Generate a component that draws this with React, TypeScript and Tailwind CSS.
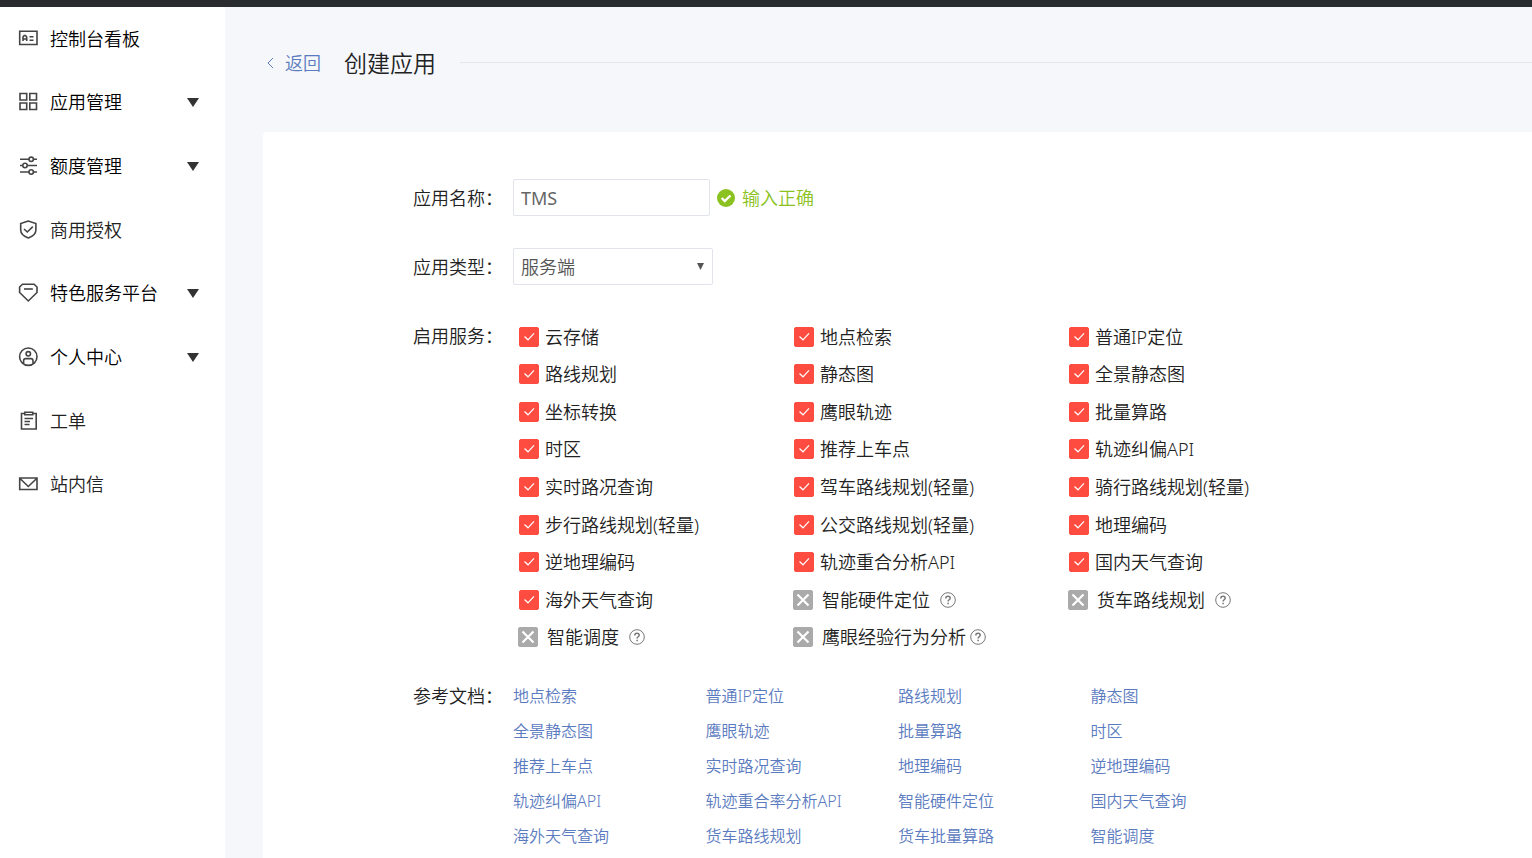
import { ReactNode } from 'react';

interface MenuItem {
  label: string;
  icon: ReactNode;
  sub?: boolean;
  muted?: boolean;
}

const MENU: MenuItem[] = [
  {
    label: '控制台看板',
    icon: (
      <>
        <path d="M1.700 2.200h17.300v13.300H1.700z" />
        <path d="M5 12V8l1.200-1.500h1.300L8.700 8v4M5 10h3.700M11.500 7.700h4M11.500 11.200h4" />
      </>
    ),
  },
  {
    label: '应用管理',
    sub: true,
    icon: <path d="M2 1.500h6.700v6.500H2zM11.800 1.500h6.700v6.500h-6.700zM2 11h6.700v6.500H2zM11.800 11h6.700v6.500h-6.700z" />,
  },
  {
    label: '额度管理',
    sub: true,
    icon: (
      <>
        <path d="M2 3.300h9M15.500 3.300h3.500M2 9.500h2.500M9.500 9.500H19M2 16h9M15.500 16h3.500" />
        <circle cx="13.200" cy="3.300" r="2.200" />
        <circle cx="7" cy="9.500" r="2.200" />
        <circle cx="13.200" cy="16" r="2.200" />
      </>
    ),
  },
  {
    label: '商用授权',
    muted: true,
    icon: (
      <>
        <path d="M10.300 1L2.700 3.500v6.500c0 4 3 6.300 7.600 8 4.600-1.700 7.600-4 7.600-8V3.500z" />
        <path d="M6 9l3.300 3 5.500-5.300" />
      </>
    ),
  },
  {
    label: '特色服务平台',
    sub: true,
    icon: (
      <>
        <path d="M4.500 1.200h11.600l2.900 2.800v5.500l-8.700 8.500-8.700-8.500V4z" />
        <path d="M6 6h8.800" />
      </>
    ),
  },
  {
    label: '个人中心',
    sub: true,
    icon: (
      <>
        <circle cx="10.300" cy="9.700" r="8.700" />
        <circle cx="10.300" cy="6.800" r="2.200" />
        <path d="M5.600 16.500v-2.700c0-1.300.9-2.200 2.200-2.200h5c1.300 0 2.200.9 2.200 2.200v2.700" />
      </>
    ),
  },
  {
    label: '工单',
    muted: true,
    icon: (
      <>
        <path d="M6.800 2.500H3.500V18h14.700V2.500h-3.500M6.800 1.200h7.900v2.500H6.800z" />
        <path d="M6.500 7.500h8.500M6.500 10.500h5.500M6.500 13.500h5" />
      </>
    ),
  },
  {
    label: '站内信',
    muted: true,
    icon: <path d="M1.700 4H19v11.500H1.700zM2 4.500l8.300 8L18.700 4.500" />,
  },
];

interface Service {
  name: string;
  off?: boolean;
  tight?: boolean;
}

const SERVICES: Service[] = [
  { name: '云存储' },
  { name: '地点检索' },
  { name: '普通IP定位' },
  { name: '路线规划' },
  { name: '静态图' },
  { name: '全景静态图' },
  { name: '坐标转换' },
  { name: '鹰眼轨迹' },
  { name: '批量算路' },
  { name: '时区' },
  { name: '推荐上车点' },
  { name: '轨迹纠偏API' },
  { name: '实时路况查询' },
  { name: '驾车路线规划(轻量)' },
  { name: '骑行路线规划(轻量)' },
  { name: '步行路线规划(轻量)' },
  { name: '公交路线规划(轻量)' },
  { name: '地理编码' },
  { name: '逆地理编码' },
  { name: '轨迹重合分析API' },
  { name: '国内天气查询' },
  { name: '海外天气查询' },
  { name: '智能硬件定位', off: true },
  { name: '货车路线规划', off: true },
  { name: '智能调度', off: true },
  { name: '鹰眼经验行为分析', off: true, tight: true },
];

const DOCS = [
  '地点检索', '普通IP定位', '路线规划', '静态图',
  '全景静态图', '鹰眼轨迹', '批量算路', '时区',
  '推荐上车点', '实时路况查询', '地理编码', '逆地理编码',
  '轨迹纠偏API', '轨迹重合率分析API', '智能硬件定位', '国内天气查询',
  '海外天气查询', '货车路线规划', '货车批量算路', '智能调度',
];

function Sidebar() {
  return (
    <nav className="w-[225px] shrink-0 bg-white">
      <ul>
        {MENU.map(item => (
          <li key={item.label}>
            <a
              href="#"
              className={`flex items-center pl-[18px] pr-[26px] ${item.sub ? 'h-16' : 'h-[63px]'} ${item.muted ? 'text-[#222]' : 'text-black'}`}
            >
              <svg viewBox="0 0 20 20" className="mr-3 size-5 shrink-0" fill="none" stroke="#444" strokeWidth="1.600">
                {item.icon}
              </svg>
              <span className="flex-1">{item.label}</span>
              {item.sub && (
                <svg viewBox="0 0 12 9" className="h-[9px] w-3" fill="#333">
                  <path d="M0 0h12L6 9z" />
                </svg>
              )}
            </a>
          </li>
        ))}
      </ul>
    </nav>
  );
}

function HelpIcon() {
  return (
    <svg viewBox="0 0 16 16" className="size-4" fill="none" stroke="#777">
      <circle cx="8" cy="8" r="7.300" />
      <path d="M5.800 6.500c0-1.400.9-2.200 2.200-2.200s2.200.8 2.200 1.900c0 1.500-2.100 1.600-2.100 3.200" strokeWidth="1.500" />
      <path d="M8.100 10.700v1.500" strokeWidth="1.500" />
    </svg>
  );
}

function ServiceBox({ service }: { service: Service }) {
  const { name, off, tight } = service;
  return (
    <div className="flex items-center">
      <label className={`flex items-center ${off ? 'gap-[9px] pl-[5px]' : 'gap-[6px] pl-[6px]'}`}>
        <span className="grid size-5 shrink-0">
          <input
            type="checkbox"
            defaultChecked={!off}
            disabled={off}
            className="peer col-start-1 row-start-1 size-5 appearance-none rounded-xs border border-[#bbb] checked:border-[#ff4c40] checked:bg-[#ff4c40] disabled:border-[#aaa] disabled:bg-[#aaa]"
          />
          {off ? (
            <svg viewBox="0 0 20 20" className="pointer-events-none col-start-1 row-start-1 size-5" fill="none" stroke="#fff" strokeWidth="2.200">
              <path d="M4.500 4.500l11 11M15.500 4.500l-11 11" />
            </svg>
          ) : (
            <svg viewBox="0 0 20 20" className="pointer-events-none invisible col-start-1 row-start-1 size-5 peer-checked:visible" fill="none" stroke="#fff" strokeWidth="1.200">
              <path d="M5.500 9.500l3.500 3.300 6-6.500" />
            </svg>
          )}
        </span>
        <span>{name}</span>
      </label>
      {off && (
        <button type="button" aria-label={name} className={tight ? 'ml-1' : 'ml-[10px]'}>
          <HelpIcon />
        </button>
      )}
    </div>
  );
}

export default function App() {
  return (
    <div className="flex min-h-screen flex-col overflow-x-hidden bg-[#f5f7fb] text-[18px] leading-6 font-[350] text-[#222] [font-family:'Noto_Sans','Noto_Sans_CJK_SC',sans-serif]">
      <div className="h-[7px] bg-[#282c2e]" />
      <div className="flex flex-1">
        <Sidebar />

        <main className="flex min-w-0 flex-1 flex-col pl-[38px]">
          <header className="mb-[14px] flex h-[111px] items-center">
            <a href="#" className="flex items-center gap-[10px] pl-[3px] text-[#5b7bc0]">
              <svg viewBox="0 0 9 12" className="h-3 w-[9px]" fill="none" stroke="currentColor">
                <path d="M7 1L2 6l5 5" />
              </svg>
              返回
            </a>
            <h1 className="ml-[23px] text-[23px]">创建应用</h1>
            <div className="ml-6 h-px flex-1 bg-[#e3e6ea]" />
          </header>

          <form className="flex-1 rounded-tl bg-white pt-[47px] pb-1 pl-[150px]">
            {/* Name */}
            <div className="mb-8 flex items-center">
              <label htmlFor="name" className="w-[100px] shrink-0">应用名称：</label>
              <input
                id="name"
                defaultValue="TMS"
                className="h-[37px] w-[197px] rounded-xs border border-[#e1e4ec] px-[7px] font-normal text-[#666]"
              />
              <span className="ml-[7px] flex items-center gap-[7px] text-[#8bc220]">
                <svg viewBox="0 0 18 18" className="size-[18px]">
                  <circle cx="9" cy="9" r="9" fill="#8bc220" />
                  <path d="M4.700 9l3 3 5.800-5.500" fill="none" stroke="#fff" strokeWidth="2.400" />
                </svg>
                输入正确
              </span>
            </div>

            {/* Type */}
            <div className="mb-[33px] flex items-center">
              <label htmlFor="type" className="w-[100px] shrink-0">应用类型：</label>
              <div className="grid items-center">
                <select
                  id="type"
                  className="col-start-1 row-start-1 h-[37px] w-[200px] appearance-none rounded-xs border border-[#e1e4ec] px-[7px] text-[#555]"
                >
                  <option>服务端</option>
                  <option>浏览器端</option>
                </select>
                <svg viewBox="0 0 7 7" className="pointer-events-none col-start-1 row-start-1 mr-[9px] size-[7px] justify-self-end" fill="#555">
                  <path d="M0 0h7L3.500 7z" />
                </svg>
              </div>
            </div>

            {/* Services */}
            <fieldset className="mb-[23px] flex">
              <legend className="float-left h-[37px] w-[100px] shrink-0 leading-[37px]">启用服务：</legend>
              <div className="grid min-h-[338px] w-[825px] grid-cols-3 grid-rows-9">
                {SERVICES.map(s => (
                  <ServiceBox key={s.name} service={s} />
                ))}
              </div>
            </fieldset>

            {/* Docs */}
            <section className="flex">
              <h2 className="w-[100px] shrink-0 leading-[35px]">参考文档：</h2>
              <ul className="grid w-[770px] grid-cols-4 text-base leading-[35px]">
                {DOCS.map(doc => (
                  <li key={doc}>
                    <a href="#" className="text-[#5b7bc0]">{doc}</a>
                  </li>
                ))}
              </ul>
            </section>
          </form>
        </main>
      </div>
    </div>
  );
}
